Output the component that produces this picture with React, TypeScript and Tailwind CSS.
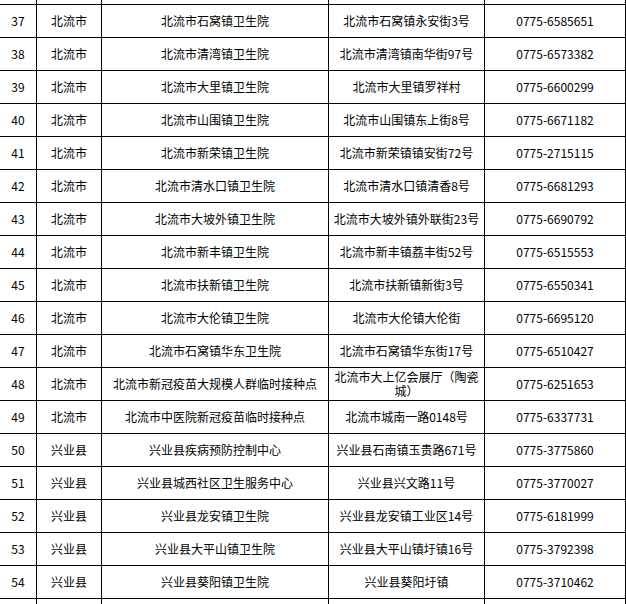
import React from 'react';

type Row = [string, string, string, string, string];

const rows: Row[] = [
  ['37', '北流市', '北流市石窝镇卫生院', '北流市石窝镇永安街3号', '0775-6585651'],
  ['38', '北流市', '北流市清湾镇卫生院', '北流市清湾镇南华街97号', '0775-6573382'],
  ['39', '北流市', '北流市大里镇卫生院', '北流市大里镇罗祥村', '0775-6600299'],
  ['40', '北流市', '北流市山围镇卫生院', '北流市山围镇东上街8号', '0775-6671182'],
  ['41', '北流市', '北流市新荣镇卫生院', '北流市新荣镇镇安街72号', '0775-2715115'],
  ['42', '北流市', '北流市清水口镇卫生院', '北流市清水口镇清香8号', '0775-6681293'],
  ['43', '北流市', '北流市大坡外镇卫生院', '北流市大坡外镇外联街23号', '0775-6690792'],
  ['44', '北流市', '北流市新丰镇卫生院', '北流市新丰镇荔丰街52号', '0775-6515553'],
  ['45', '北流市', '北流市扶新镇卫生院', '北流市扶新镇新街3号', '0775-6550341'],
  ['46', '北流市', '北流市大伦镇卫生院', '北流市大伦镇大伦街', '0775-6695120'],
  ['47', '北流市', '北流市石窝镇华东卫生院', '北流市石窝镇华东街17号', '0775-6510427'],
  ['48', '北流市', '北流市新冠疫苗大规模人群临时接种点', '北流市大上亿会展厅（陶瓷城）', '0775-6251653'],
  ['49', '北流市', '北流市中医院新冠疫苗临时接种点', '北流市城南一路0148号', '0775-6337731'],
  ['50', '兴业县', '兴业县疾病预防控制中心', '兴业县石南镇玉贵路671号', '0775-3775860'],
  ['51', '兴业县', '兴业县城西社区卫生服务中心', '兴业县兴文路11号', '0775-3770027'],
  ['52', '兴业县', '兴业县龙安镇卫生院', '兴业县龙安镇工业区14号', '0775-6181999'],
  ['53', '兴业县', '兴业县大平山镇卫生院', '兴业县大平山镇圩镇16号', '0775-3792398'],
  ['54', '兴业县', '兴业县葵阳镇卫生院', '兴业县葵阳圩镇', '0775-3710462'],
];

const grid = 'grid grid-cols-[37px_65px_227px_156px_141px]';
const cell = 'flex items-center justify-center text-center border-r border-black px-1';

const Stub = ({ bottom }: { bottom?: boolean }) => (
  <div className={`${grid} h-[5px] ${bottom ? '' : 'border-b border-black'}`}>
    <div className="border-r border-black" />
    <div className="border-r border-black" />
    <div className="border-r border-black" />
    <div className="border-r border-black" />
    <div className="border-r border-black" />
  </div>
);

export default function App() {
  return (
    <div
      className="w-[626px] h-[604px] overflow-hidden bg-white text-black text-[12px] leading-[14px]"
      style={{ fontFamily: '"Noto Sans CJK SC", "Noto Sans", sans-serif' }}
    >
      <Stub />
      {rows.map((r) => (
        <div key={r[0]} className={`${grid} h-[33px] border-b border-black`}>
          {r.map((v, i) => (
            <div key={i} className={cell}>
              {v}
            </div>
          ))}
        </div>
      ))}
      <Stub bottom />
    </div>
  );
}
